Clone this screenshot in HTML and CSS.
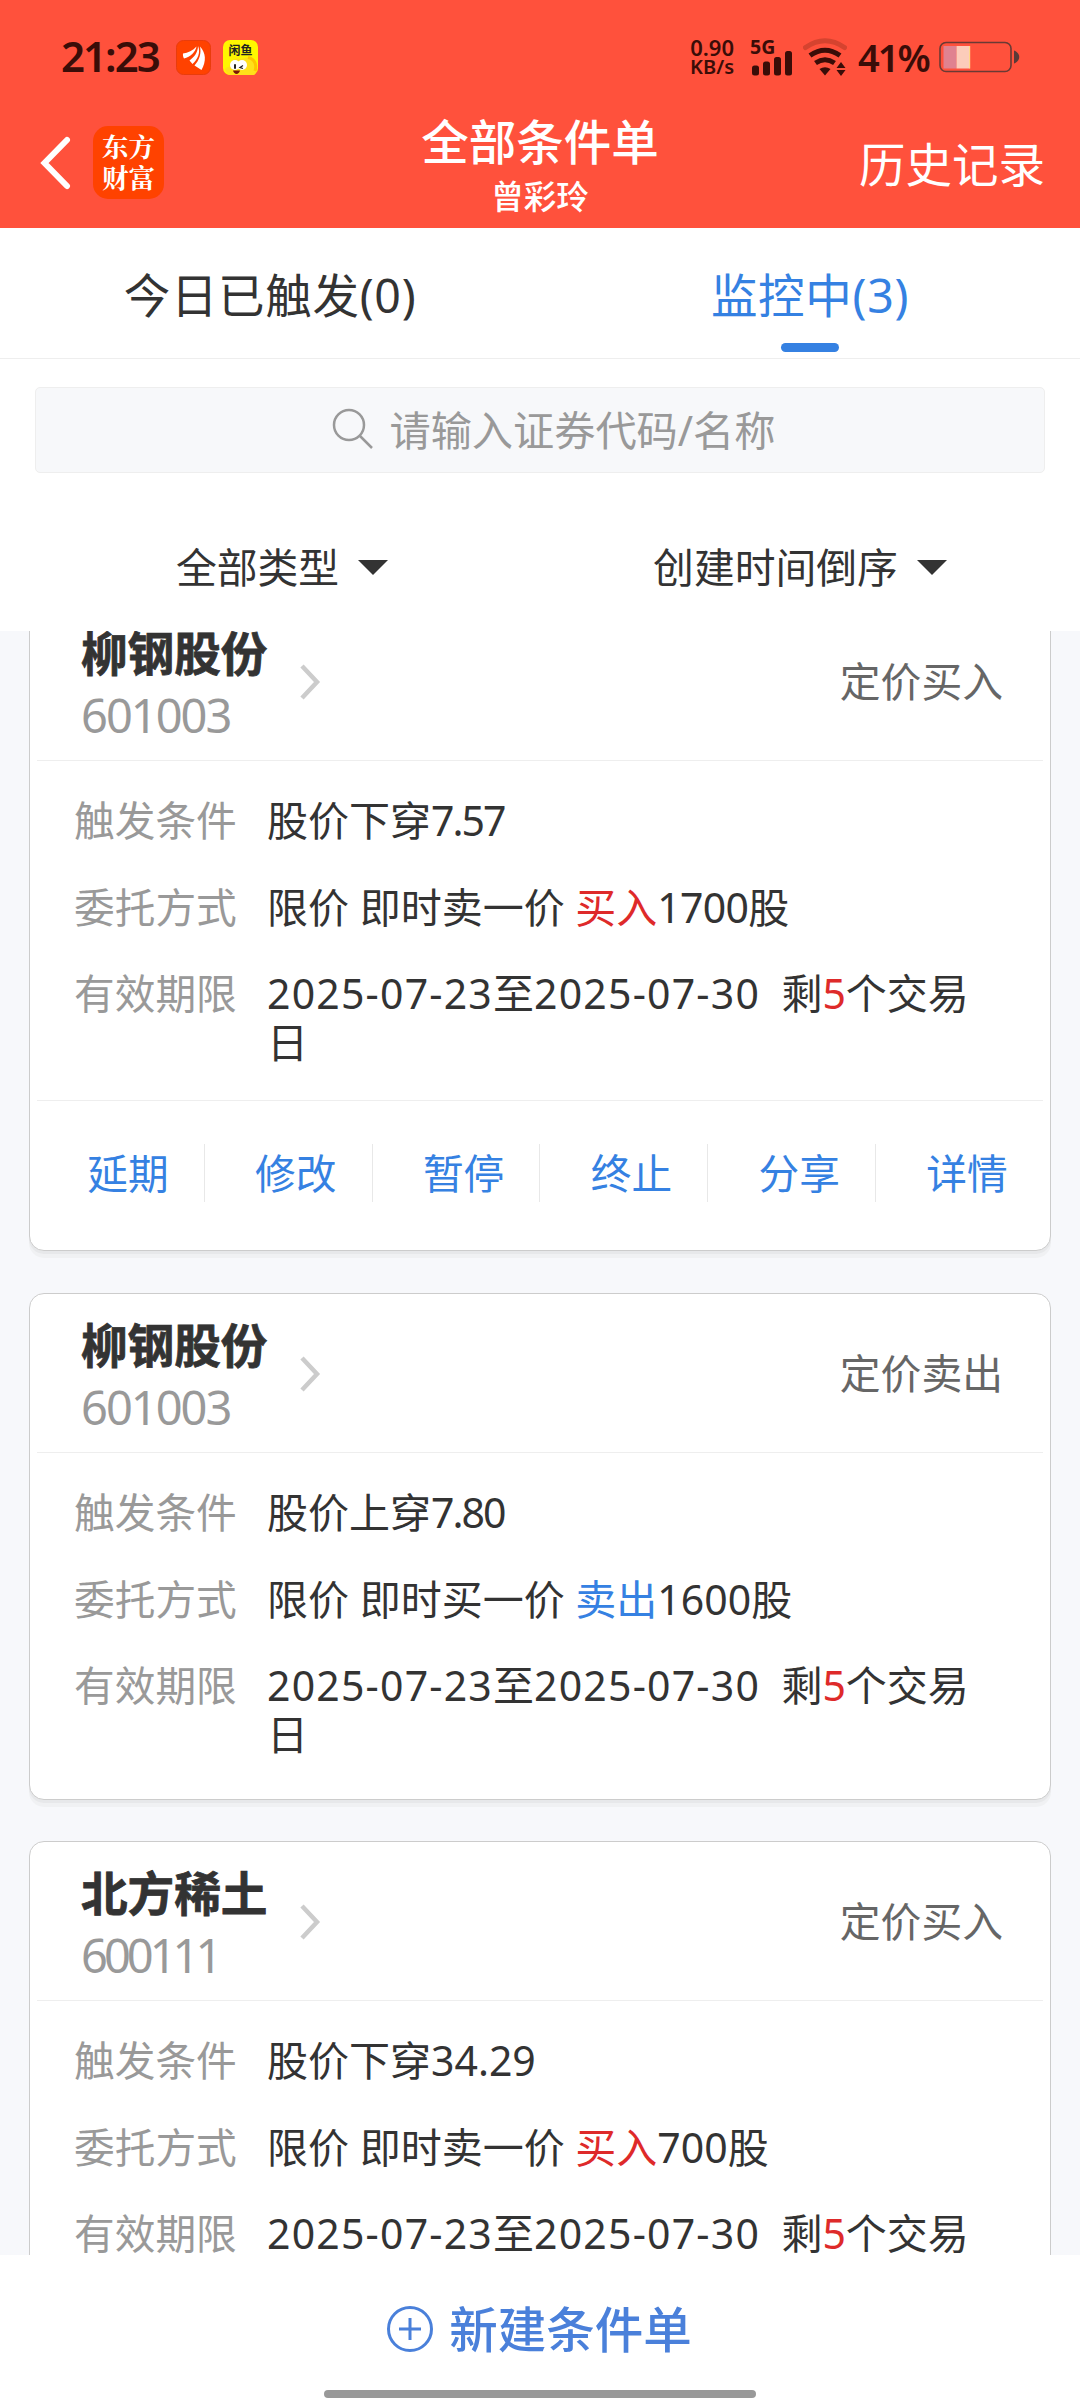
FILE: index.html
```html
<!DOCTYPE html>
<html lang="zh-CN">

<head>
  <meta charset="UTF-8">
  <title>全部条件单</title>
  <link rel="stylesheet" href="styles.css">
</head>

<body>

  <div id="header">
    <div class="status-bar">
      <span class="time">21:23</span>
      <svg class="app-icon" viewBox="0 0 35 35">
        <rect x="0.500" y="0.500" width="34" height="34" rx="7" fill="#ff4200" stroke="#e93c0c" />
        <path d="M7 13.500C12 13 17 10.500 20.500 6.500C19.500 12 14.500 17 8 18.500C7 17 6.800 15 7 13.500z" fill="#fff" />
        <path d="M13.500 20.500C18.500 17 22 12 22 6C25 12.500 21.500 19.500 16.500 24z" fill="#fff" />
        <path d="M18.500 25.500C23.500 20 25.500 13 24 6.500C30 13 30.500 21 25.500 30z" fill="#fff" />
      </svg>
      <svg class="app-icon" viewBox="0 0 35 35">
        <rect width="35" height="35" rx="7" fill="#fff600" />
        <path d="M6 35C1 31 1 27 6 27C7 20 12 17 19 19C26 15 32 19 33.500 27C34 31 33 35 30 35z" fill="#ffe01a" />
        <path d="M25 17.500C32 19 34 25 32 31" fill="none" stroke="#ffc400" stroke-width="3" />
        <circle cx="12" cy="25" r="5" fill="#fff" />
        <circle cx="19" cy="25" r="5" fill="#fff" />
        <text x="17.500" y="15" class="fish-text">闲鱼</text>
        <rect x="11" y="24" width="2" height="5" rx="1" fill="#222" />
        <path d="M20 25.500L17 27.500L20 28.500" fill="none" stroke="#222" stroke-width="1.300" />
        <path d="M10 30.500H17C16 35 11 35 10 30.500z" fill="#7a1408" />
      </svg>
      <div class="status-right">
        <div class="speed"><span>0.90</span><span>KB/s</span></div>
        <svg class="signal" width="44" height="38" viewBox="0 0 44 38">
          <text x="0" y="16" class="net-text">5G</text>
          <rect x="2" y="27.500" width="7" height="10" rx="2.500" />
          <rect x="13" y="23.500" width="7" height="14" rx="2.500" />
          <rect x="24" y="19" width="7" height="18.500" rx="2.500" />
          <rect x="35" y="13" width="7" height="24.500" rx="2.500" />
        </svg>
        <svg class="wifi" width="44" height="38" viewBox="0 0 44 38">
          <path d="M2.500 9.500Q22 -4 41.500 9.500" class="wifi-off" />
          <path d="M7 17.500Q22 7 37 17.500" />
          <path d="M12.500 25Q22 18.500 31.500 25" />
          <path d="M16.500 31Q22 27.500 27.500 31L22 37.500z" class="solid" />
          <path d="M33.500 30L38 24L42.500 30zM33.500 32H42.500L38 38z" class="solid" />
        </svg>
        <span class="percent">41%</span>
        <svg class="battery" width="82" height="32" viewBox="0 0 82 32">
          <rect x="1" y="1.500" width="71" height="29" rx="6" fill="none" stroke="#6a3a34" stroke-width="1.600" />
          <rect x="4.500" y="5" width="13" height="22.500" fill="#e08290" />
          <rect x="17.500" y="5" width="13" height="22.500" fill="#fcccba" />
          <rect x="30" y="5" width="1.200" height="22.500" fill="#ffd98a" />
          <path d="M75 9.500C82 12 82 20 75 22.500z" fill="#5a3a38" />
        </svg>
      </div>
    </div>

    <div class="nav">
      <div class="nav-side">
        <svg class="back" width="32" height="54" viewBox="0 0 32 54">
          <path d="M27 4L4.500 27L27 50" />
        </svg>
        <div class="logo">东方<br>财富</div>
      </div>
      <div class="nav-title">
        <div class="title">全部条件单</div>
        <div class="user">曾彩玲</div>
      </div>
      <div class="nav-side history">历史记录</div>
    </div>
  </div>

  <div class="tabs">
    <div class="tab">今日已触发(0)</div>
    <div class="tab active">监控中(3)</div>
  </div>

  <div class="search">
    <svg width="42" height="42" viewBox="0 0 42 42">
      <circle cx="17" cy="17" r="15" />
      <path d="M27.500 27.500L40 40" />
    </svg>
    <span>请输入证券代码/名称</span>
  </div>

  <div class="filters">
    <div class="filter">全部类型<i class="arrow"></i></div>
    <div class="filter">创建时间倒序<i class="arrow"></i></div>
  </div>

  <div id="list">
    <div class="card">
      <div class="card-head">
        <div>
          <div class="name">柳钢股份</div>
          <div class="code">601003</div>
        </div>
        <svg class="more" width="22" height="38" viewBox="0 0 22 38"><path d="M3 3L18 19L3 35" /></svg>
        <div class="type">定价买入</div>
      </div>
      <div class="card-body">
        <div class="row"><label>触发条件</label><div class="value">股价下穿<span class="price">7.57</span></div></div>
        <div class="row"><label>委托方式</label><div class="value">限价 即时卖一价 <span class="buy">买入</span><span class="qty">1700</span>股</div></div>
        <div class="row"><label>有效期限</label><div class="value"><span class="date">2025-07-23</span>至<span class="date">2025-07-30</span>&nbsp; 剩<span class="buy">5</span>个交易日</div></div>
      </div>
      <div class="actions">
        <a>延期</a>
        <a>修改</a>
        <a>暂停</a>
        <a>终止</a>
        <a>分享</a>
        <a>详情</a>
      </div>
    </div>

    <div class="card">
      <div class="card-head">
        <div>
          <div class="name">柳钢股份</div>
          <div class="code">601003</div>
        </div>
        <svg class="more" width="22" height="38" viewBox="0 0 22 38"><path d="M3 3L18 19L3 35" /></svg>
        <div class="type">定价卖出</div>
      </div>
      <div class="card-body">
        <div class="row"><label>触发条件</label><div class="value">股价上穿<span class="price">7.80</span></div></div>
        <div class="row"><label>委托方式</label><div class="value">限价 即时买一价 <span class="sell">卖出</span><span>1600</span>股</div></div>
        <div class="row"><label>有效期限</label><div class="value"><span class="date">2025-07-23</span>至<span class="date">2025-07-30</span>&nbsp; 剩<span class="buy">5</span>个交易日</div></div>
      </div>
    </div>

    <div class="card">
      <div class="card-head">
        <div>
          <div class="name">北方稀土</div>
          <div class="code narrow">600111</div>
        </div>
        <svg class="more" width="22" height="38" viewBox="0 0 22 38"><path d="M3 3L18 19L3 35" /></svg>
        <div class="type">定价买入</div>
      </div>
      <div class="card-body">
        <div class="row"><label>触发条件</label><div class="value">股价下穿<span>34.29</span></div></div>
        <div class="row"><label>委托方式</label><div class="value">限价 即时卖一价 <span class="buy">买入</span><span>700</span>股</div></div>
        <div class="row"><label>有效期限</label><div class="value"><span class="date">2025-07-23</span>至<span class="date">2025-07-30</span>&nbsp; 剩<span class="buy">5</span>个交易日</div></div>
      </div>
    </div>
  </div>

  <div id="footer">
    <div class="create">
      <svg width="48" height="48" viewBox="0 0 48 48">
        <circle cx="24" cy="24" r="21.500" />
        <path d="M24 13V35M13 24H35" />
      </svg>
      <span>新建条件单</span>
    </div>
    <div class="home-bar"></div>
  </div>

</body>

</html>
```

FILE: styles.css
```css
* {
  box-sizing: border-box;
}

body {
  margin: 0;
  width: 1080px;
  height: 2400px;
  display: flex;
  flex-direction: column;
  overflow: hidden;
  font-family: "Noto Sans", "Noto Sans CJK SC", sans-serif;
  background-color: #fff;
  color: #333;
}

svg {
  display: block;
  flex: none;
}

/* header */

#header {
  height: 228px;
  flex: none;
  background-color: #ff513c;
  color: #fff;
}

.status-bar {
  display: flex;
  align-items: center;
  height: 114px;
  padding: 0 59px 0 61px;
  color: #3a0d08;
}

.time {
  width: 115px;
  font-size: 42px;
  font-weight: 600;
  line-height: 48px;
  letter-spacing: -2px;
  padding-bottom: 2px;
}

.app-icon {
  width: 35px;
  height: 35px;
  margin-right: 12px;
}

.fish-text {
  font-size: 12px;
  font-weight: 700;
  text-anchor: middle;
  fill: #222;
}

.status-right {
  display: flex;
  align-items: center;
  margin-left: auto;
  fill: #3a0d08;
}

.speed {
  display: flex;
  flex-direction: column;
  align-items: flex-end;
  margin-right: 16px;
  font-size: 20px;
  font-weight: 600;
  line-height: 20px;
}

.speed span:first-child {
  font-size: 22px;
}

.net-text {
  font-size: 19.500px;
  font-weight: 700;
}

.signal {
  margin-right: 9px;
}

.wifi {
  margin-right: 11px;
  fill: none;
  stroke: #3a0d08;
  stroke-width: 5;
}

.wifi-off {
  stroke: #d5432f;
  stroke-linecap: round;
}

.wifi .solid {
  fill: #3a0d08;
  stroke: none;
}

.percent {
  width: 81px;
  font-size: 38px;
  font-weight: 600;
  line-height: 44px;
  letter-spacing: -2px;
}

.nav {
  display: flex;
  height: 114px;
  padding: 0 35px 0 40px;
}

.nav-side {
  flex: 1;
  display: flex;
  align-items: flex-start;
  padding-top: 12px;
}

.back {
  margin: 10px 21px 0 0;
  fill: none;
  stroke: #fff;
  stroke-width: 6;
  stroke-linecap: round;
}

.logo {
  width: 71px;
  height: 73px;
  padding-top: 4px;
  border-radius: 15px;
  background-color: #ff4200;
  font-family: "Noto Serif CJK SC", "Noto Sans CJK SC", sans-serif;
  font-size: 26.500px;
  font-weight: 700;
  line-height: 31px;
  text-align: center;
}

.nav-title {
  width: 242px;
  margin-right: 5px;
  text-align: center;
}

.title {
  margin-top: -2px;
  font-size: 47.500px;
  font-weight: 500;
  line-height: 60px;
}

.user {
  margin-top: 2px;
  font-size: 32.500px;
  font-weight: 500;
  line-height: 46px;
}

.history {
  justify-content: flex-end;
  padding-top: 20px;
  font-size: 46.500px;
  line-height: 60px;
}

/* tabs */

.tabs {
  display: flex;
  flex: none;
  height: 131px;
  border-bottom: 1px solid #eee;
}

.tab {
  flex: 1;
  position: relative;
  padding-top: 34px;
  font-size: 46.500px;
  line-height: 66px;
  letter-spacing: 0.700px;
  text-align: center;
}

.tab.active {
  color: #3581e2;
}

.tab.active::after {
  content: "";
  position: absolute;
  left: 50%;
  bottom: 6px;
  width: 58px;
  height: 9px;
  margin-left: -29px;
  border-radius: 5px;
  background-color: #3581e2;
}

/* search */

.search {
  display: flex;
  flex: none;
  align-items: center;
  justify-content: center;
  height: 86px;
  margin: 28px 35px 0;
  padding-left: 28px;
  border: 1px solid #eee;
  border-radius: 5px;
  background-color: #f7f8fa;
  color: #999;
  font-size: 41.200px;
  line-height: 60px;
}

.search svg {
  margin: -3px 15px 0 0;
  fill: none;
  stroke: #999;
  stroke-width: 2.500;
}

.filters {
  display: flex;
  flex: none;
  height: 158px;
  padding-top: 64px;
  font-size: 40.800px;
  line-height: 60px;
}

.filter {
  flex: 1;
  display: flex;
  align-items: center;
  justify-content: center;
  height: 60px;
  padding-left: 34px;
}

.filter + .filter {
  padding-left: 0;
  padding-right: 32px;
  margin-left: 22px;
}

.arrow {
  margin-left: 19px;
  border: 15px solid transparent;
  border-top-color: #333;
  border-bottom: none;
}

/* condition orders */

#list {
  flex: 1;
  min-height: 0;
  overflow: hidden;
  padding: 0 29px;
  background-color: #f7f8fb;
}

.card {
  height: 507px;
  margin-bottom: 41px;
  padding: 0 7px;
  border: 1px solid #ccc;
  border-radius: 15px;
  background-color: #fff;
  box-shadow: 0 3px 0 #e7e8ea, 0 7px 0 #f0f1f3;
}

/* scrolled a little under the filter bar */
.card:first-child {
  height: 650px;
  margin-top: -30px;
  margin-bottom: 42px;
}

.card-head {
  display: flex;
  align-items: center;
  height: 159px;
  padding: 6px 40px 0 44px;
  border-bottom: 1px solid #eee;
}

.name {
  width: 200px;
  font-size: 46.600px;
  font-weight: 700;
  line-height: 61px;
  -webkit-text-stroke: 0.800px #333;
}

.code {
  color: #999;
  font-size: 47px;
  line-height: 62px;
  letter-spacing: -2px;
}

.code.narrow {
  letter-spacing: -4px;
}

.more {
  margin: 0 0 5px 18px;
  fill: none;
  stroke: #ccc;
  stroke-width: 4.500;
}

.type {
  margin: 0 0 6px auto;
  color: #666;
  font-size: 40.800px;
  line-height: 60px;
}

.card-body {
  padding: 35px 66px 0 37px;
  font-size: 41px;
  line-height: 49px;
}

.row {
  display: flex;
  margin-bottom: 37.500px;
}

.row label {
  width: 193px;
  flex: none;
  color: #999;
  font-size: 40.700px;
}

.date {
  letter-spacing: 1.200px;
}

.price {
  letter-spacing: -2px;
}

.qty {
  letter-spacing: -0.700px;
}

.buy {
  color: #de2a2a;
}

.sell {
  color: #3581e2;
}

.actions {
  display: flex;
  margin-top: -5px;
  padding-top: 43px;
  border-top: 1px solid #eee;
}

.actions a {
  flex: 1;
  height: 58px;
  padding-left: 15px;
  border-right: 1px solid #e8e8e8;
  color: #3581e2;
  font-size: 40.700px;
  line-height: 58px;
  text-align: center;
}

.actions a:last-child {
  border-right: none;
}

/* footer */

#footer {
  display: flex;
  flex: none;
  flex-direction: column;
  align-items: center;
  justify-content: space-between;
  height: 145px;
  padding: 40px 0 2px;
}

.create {
  display: flex;
  align-items: center;
  margin-right: 2px;
  color: #4a80da;
  font-size: 48.500px;
  font-weight: 500;
  line-height: 68px;
}

.create svg {
  margin-right: 15px;
  fill: none;
  stroke: #4a80da;
  stroke-width: 3;
}

.home-bar {
  width: 432px;
  height: 8px;
  border-radius: 4px;
  background-color: #999;
}
```
